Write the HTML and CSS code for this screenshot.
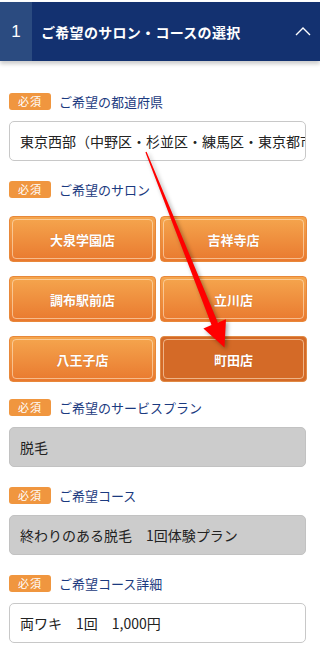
FILE: index.html
```html
<!DOCTYPE html>
<html lang="ja">
<head>
    <meta charset="UTF-8">
    <meta name="viewport" content="width=device-width, initial-scale=1.0">
    <title>ご希望のサロン・コースの選択</title>
    <link rel="stylesheet" href="styles.css">
</head>
<body>

<!-- ステップの見出し -->
<div class="step-head">
    <div class="step-num">1</div>
    <div class="step-title">ご希望のサロン・コースの選択</div>
    <svg class="step-toggle" width="16" height="10" viewBox="0 0 16 10">
        <polyline points="1,9 8,2 15,9" fill="none" stroke="#fff" stroke-width="1.4"/>
    </svg>
</div>

<div class="form">
    <div class="group">
        <div class="label-row"><span class="badge">必須</span><span class="label">ご希望の都道府県</span></div>
        <div class="field">東京西部（中野区・杉並区・練馬区・東京都市部）</div>
    </div>

    <div class="group salon">
        <div class="label-row"><span class="badge">必須</span><span class="label">ご希望のサロン</span></div>
        <div class="salon-list">
            <div class="salon-btn">大泉学園店</div>
            <div class="salon-btn">吉祥寺店</div>
            <div class="salon-btn">調布駅前店</div>
            <div class="salon-btn">立川店</div>
            <div class="salon-btn">八王子店</div>
            <div class="salon-btn active">町田店</div>
        </div>
    </div>

    <div class="group">
        <div class="label-row"><span class="badge">必須</span><span class="label">ご希望のサービスプラン</span></div>
        <div class="field disabled">脱毛</div>
    </div>

    <div class="group">
        <div class="label-row"><span class="badge">必須</span><span class="label">ご希望コース</span></div>
        <div class="field disabled">終わりのある脱毛　1回体験プラン</div>
    </div>

    <div class="group">
        <div class="label-row"><span class="badge">必須</span><span class="label">ご希望コース詳細</span></div>
        <div class="field">両ワキ　1回　1,000円</div>
    </div>
</div>

<!-- 注釈の矢印 -->
<svg class="pointer" width="320" height="647" viewBox="0 0 320 647">
    <polygon points="146.6,151.8 217.9,322.5 226,319.2 224.5,347.5 203.4,328.5 211.5,325.1 145.4,152.2" fill="#ff0000"/>
</svg>

</body>
</html>
```

FILE: styles.css
```css
body {
    margin: 0;
    padding-top: 2px;
    font-family: "Noto Sans CJK JP", "Liberation Sans", sans-serif;
    background: #fff;
    position: relative;
}
.step-head {
    display: flex;
    align-items: center;
    height: 59px;
    background: #133170;
    color: #fff;
    box-shadow: 0 3px 4px rgba(0, 0, 0, 0.2);
}
.step-num {
    width: 32px;
    height: 100%;
    background: #2b4b80;
    display: flex;
    align-items: center;
    justify-content: center;
    font-family: "Liberation Sans", sans-serif;
    font-size: 17px;
}
.step-title {
    flex: 1;
    padding-left: 9px;
    font-size: 14px;
    font-weight: bold;
    letter-spacing: 0.3px;
}
.step-toggle {
    margin-right: 9px;
    margin-bottom: 2px;
}
.form {
    width: 298px;
    padding: 32px 0 0 9px;
}
.group {
    margin-bottom: 20px;
}
.group.salon {
    margin-bottom: 17px;
}
.label-row {
    display: flex;
    align-items: center;
    height: 17px;
    margin-bottom: 11px;
}
.badge {
    width: 42px;
    height: 17px;
    line-height: 17px;
    background: #f0963f;
    border-radius: 3px;
    color: #fff;
    font-size: 11px;
    text-align: center;
    letter-spacing: 1px;
}
.label {
    margin-left: 8px;
    font-size: 13px;
    color: #1b3a80;
}
.field {
    box-sizing: border-box;
    width: 297px;
    height: 40px;
    padding: 0 10px;
    border: 1px solid #c8c8c8;
    border-radius: 5px;
    font-size: 14px;
    line-height: 38px;
    color: #222;
    white-space: nowrap;
    overflow: hidden;
}
.field.disabled {
    background: #cccccc;
    border-color: #c2c2c2;
}
.salon-list {
    display: grid;
    grid-template-columns: 1fr 1fr;
    column-gap: 4px;
    row-gap: 14px;
    margin-top: 18px;
}
.salon-btn {
    position: relative;
    box-sizing: border-box;
    height: 46px;
    border: 1px solid #e8883a;
    border-radius: 4px;
    background: linear-gradient(#f5a64e, #e9792f);
    color: #fff;
    font-size: 13px;
    font-weight: bold;
    display: flex;
    align-items: center;
    justify-content: center;
    text-shadow: 0 0 1px rgba(150, 60, 0, 0.4);
}
.salon-btn::before {
    content: "";
    position: absolute;
    inset: 2px;
    border: 1px solid rgba(255, 230, 200, 0.6);
    border-radius: 4px;
}
.salon-btn.active {
    background: #d46a27;
    border-color: #e08a45;
}
.pointer {
    position: absolute;
    top: 0;
    left: 0;
    pointer-events: none;
    filter: drop-shadow(2px 2px 2px rgba(0, 0, 0, 0.35));
}
```
